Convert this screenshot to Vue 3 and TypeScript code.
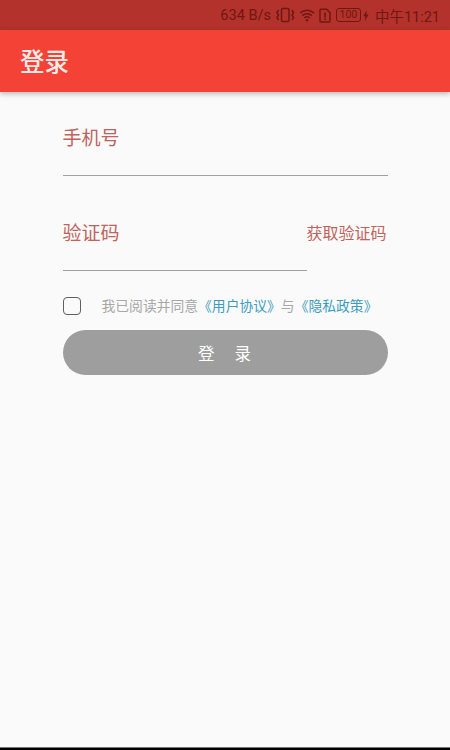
<script setup lang="ts">
import { ref } from 'vue'
const agreed = ref(false)
</script>

<template>
  <div class="page">
    <div class="status">
      <span class="speed">634 B/s</span>
      <svg class="ic" width="20" height="16" viewBox="0 0 20 16" fill="none" stroke="#6f1712" stroke-width="1.5">
        <rect x="6.5" y="1.5" width="7.5" height="13" rx="1.2" />
        <path d="M3.5 3l-1.6 2.5 1.6 2.5-1.6 2.5 1.6 2.5M17 3l1.6 2.5-1.6 2.5 1.6 2.5-1.6 2.5" />
      </svg>
      <svg class="ic wifi" width="16" height="14" viewBox="0 0 16 14" fill="none" stroke="#6f1712" stroke-width="1.5">
        <path d="M1 5a10 10 0 0 1 14 0M3.2 7.6a7 7 0 0 1 9.6 0M5.4 10a3.8 3.8 0 0 1 5.2 0" />
        <circle cx="8" cy="12.3" r="1.2" fill="#6f1712" stroke="none" />
      </svg>
      <svg class="ic sim" width="12" height="15" viewBox="0 0 12 15" fill="none" stroke="#6f1712" stroke-width="1.5">
        <path d="M1 2.500a1.200 1.200 0 0 1 1.200-1.200h5.300L11 4.800v8a1.200 1.200 0 0 1-1.200 1.200H2.200A1.200 1.200 0 0 1 1 12.800z" />
        <path d="M6 4.500v5M6 10.500v1.600" stroke-width="1.700" />
      </svg>
      <span class="batt"><span class="batt-num">100</span></span>
      <svg class="ic bolt" width="6" height="11" viewBox="0 0 6 11" fill="#6f1712"><path d="M3.600 0L0.400 6.200h2L1.800 11 5.600 4.400H3.400z" /></svg>
      <span class="clock">中午11:21</span>
    </div>
    <header class="bar">登录</header>
    <main class="form">
      <div class="field phone"><span class="label">手机号</span></div>
      <div class="code-row">
        <div class="field code"><span class="label">验证码</span></div>
        <span class="get">获取验证码</span>
      </div>
      <label class="agree">
        <input v-model="agreed" type="checkbox" class="native" />
        <span class="box"></span>
        <span class="terms">我已阅读并同意<span class="link">《用户协议》</span>与<span class="link">《隐私政策》</span></span>
      </label>
      <button class="login" type="button">登 录</button>
    </main>
    <div class="nav-edge"></div>
  </div>
</template>

<style>
html, body { margin: 0; background: #fafafa; }
</style>

<style scoped>
.page {
  width: 450px; height: 750px; display: flex; flex-direction: column; background: #fafafa; overflow: hidden;
  font-family: "Roboto", "Noto Sans CJK SC", sans-serif;
}
.status {
  height: 30px; flex: none; box-sizing: border-box; display: flex; align-items: center; justify-content: flex-end;
  padding-right: 10px; background: #b3322b; color: #6f1712; font-size: 14.5px;
}
.speed { margin-right: 4px; }
.ic { flex: none; }
.wifi { margin-left: 4px; }
.sim { margin-left: 4px; }
.batt {
  margin-left: 5px; width: 23px; height: 12px; border: 1px solid #6f1712; border-radius: 3px; display: flex;
  align-items: center; justify-content: center; font-size: 10.5px; line-height: 12px;
}
.batt-num { display: block; }
.bolt { margin-left: 2px; }
.clock { margin-left: 6px; }
.bar {
  height: 62px; flex: none; box-sizing: border-box; padding: 0 0 1px 20px; display: flex; align-items: center;
  background: #f44336; color: #fbe9e7; font-size: 24.5px; font-weight: 500; box-shadow: 0 2px 5px rgba(0,0,0,.25); position: relative;
}
.form { flex: 1; display: flex; flex-direction: column; padding: 0 62.5px; }
.field { border-bottom: 1.5px solid #a0a0a0; box-sizing: border-box; }
.phone { height: 84px; padding-top: 34px; }
.label { color: #c0635c; font-size: 19px; line-height: 26px; display: block; }
.code-row { display: flex; align-items: flex-start; }
.code { width: 244px; height: 95px; padding-top: 45px; flex: none; }
.get { color: #c0635c; font-size: 16px; line-height: 22px; margin-top: 47px; white-space: nowrap; }
.agree { display: flex; align-items: center; margin-top: 25px; height: 20px; position: relative; }
.native { position: absolute; opacity: 0; margin: 0; }
.box { width: 16px; height: 16px; border: 1.5px solid #606060; border-radius: 4px; flex: none; }
.terms { margin-left: 21px; color: #a8a8a8; font-size: 13.8px; line-height: 19px; white-space: nowrap; }
.link { color: #3d9bbd; }
.login {
  margin-top: 14px; height: 45px; width: 325px; border: 0; border-radius: 23px; background: #9e9e9e; color: #fff;
  font: inherit; font-size: 16.5px; word-spacing: 16px; padding: 0 1px 0 0;
}
.nav-edge { height: 3px; flex: none; background: #000; border-top: 1px solid #777; box-sizing: border-box; }
</style>
